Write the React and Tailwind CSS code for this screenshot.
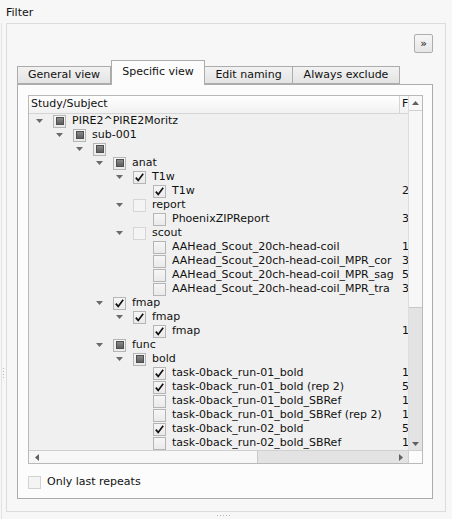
import React from 'react';

const rows = [
    { level: 0, label: 'PIRE2^PIRE2Moritz', state: 'partial', expanded: true },
    { level: 1, label: 'sub-001', state: 'partial', expanded: true },
    { level: 2, label: '', state: 'partial', expanded: true },
    { level: 3, label: 'anat', state: 'partial', expanded: true },
    { level: 4, label: 'T1w', state: 'checked', expanded: true },
    { level: 5, label: 'T1w', state: 'checked', value: '2' },
    { level: 4, label: 'report', state: 'unchecked', expanded: true, faded: true },
    { level: 5, label: 'PhoenixZIPReport', state: 'unchecked', value: '3' },
    { level: 4, label: 'scout', state: 'unchecked', expanded: true, faded: true },
    { level: 5, label: 'AAHead_Scout_20ch-head-coil', state: 'unchecked', value: '1' },
    { level: 5, label: 'AAHead_Scout_20ch-head-coil_MPR_cor', state: 'unchecked', value: '3' },
    { level: 5, label: 'AAHead_Scout_20ch-head-coil_MPR_sag', state: 'unchecked', value: '5' },
    { level: 5, label: 'AAHead_Scout_20ch-head-coil_MPR_tra', state: 'unchecked', value: '3' },
    { level: 3, label: 'fmap', state: 'checked', expanded: true },
    { level: 4, label: 'fmap', state: 'checked', expanded: true },
    { level: 5, label: 'fmap', state: 'checked', value: '1' },
    { level: 3, label: 'func', state: 'partial', expanded: true },
    { level: 4, label: 'bold', state: 'partial', expanded: true },
    { level: 5, label: 'task-0back_run-01_bold', state: 'checked', value: '1' },
    { level: 5, label: 'task-0back_run-01_bold (rep 2)', state: 'checked', value: '5' },
    { level: 5, label: 'task-0back_run-01_bold_SBRef', state: 'unchecked', value: '1' },
    { level: 5, label: 'task-0back_run-01_bold_SBRef (rep 2)', state: 'unchecked', value: '1' },
    { level: 5, label: 'task-0back_run-02_bold', state: 'checked', value: '5' },
    { level: 5, label: 'task-0back_run-02_bold_SBRef', state: 'unchecked', value: '1' },
];

const tabs = ['General view', 'Specific view', 'Edit naming', 'Always exclude'];

const CheckBox = ({ state, faded }) => (
    <span
        className={`flex h-[13px] w-[13px] shrink-0 items-center justify-center border ${
            faded ? 'border-[#d6d6d6] bg-[#f4f4f4]' : 'border-[#b5b5b5] bg-gradient-to-b from-[#f6f6f6] to-[#eaeaea]'
        }`}
    >
        {state === 'partial' && (
            <span className="block h-[8px] w-[8px] border border-[#4f4f4f] bg-gradient-to-b from-[#8a8a8a] to-[#5e5e5e]" />
        )}
        {state === 'checked' && (
            <svg width="11" height="11" viewBox="0 0 11 11">
                <path d="M1.8 5.6 L4.2 8.4 L9.2 1.8" fill="none" stroke="#111" strokeWidth="1.7" />
            </svg>
        )}
    </span>
);

const Arrow = () => (
    <svg width="7" height="4" viewBox="0 0 7 4">
        <path d="M0 0 H7 L3.5 4 Z" fill="#6a6a6a" />
    </svg>
);

const TreeRow = ({ row }) => (
    <div className="flex h-[14px] items-center whitespace-nowrap">
        <div className="flex w-[371px] shrink-0 items-center overflow-hidden">
            <span style={{ width: row.level * 20 }} className="shrink-0" />
            <span className="flex w-[20px] shrink-0 justify-center">{row.expanded && <Arrow />}</span>
            <span className="ml-[4px] shrink-0">
                <CheckBox state={row.state} faded={row.faded} />
            </span>
            <span className="ml-[6px]">{row.label}</span>
        </div>
        <div className="pl-[2px]">{row.value}</div>
    </div>
);

export default function App() {
    return (
        <div className="flex h-[519px] w-[452px] bg-[#f7f7f7] font-['DejaVu_Sans',sans-serif] text-[11px] text-[#111]">
            <div className="flex w-[6px] shrink-0 flex-col">
                <div className="mt-[23px] ml-[1px] flex flex-1 flex-col border-l border-[#e2e2e2]">
                    <div className="mt-[345px] ml-[1px] flex flex-col gap-[2px]">
                        {[0, 1, 2, 3].map(i => (
                            <span key={i} className="block h-[1px] w-[1px] bg-[#b8b8b8]" />
                        ))}
                    </div>
                </div>
            </div>
            <div className="flex flex-1 flex-col">
                <div className="flex h-[23px] items-center pt-[3px]">Filter</div>
                <div className="flex h-[489px] w-[440px] flex-col border border-[#dcdcdc] px-[10px] pt-[10px] pb-[12px] pr-[12px]">
                    <div className="flex justify-end">
                        <button className="flex h-[19px] w-[19px] items-center justify-center rounded-[2px] border border-[#adadad] bg-gradient-to-b from-[#f6f6f6] to-[#e6e6e6] pb-[1px] leading-none">
                            »
                        </button>
                    </div>
                    <div className="mt-[7px] flex h-[24px] items-end">
                        {tabs.map((t, i) =>
                            i === 1 ? (
                                <div
                                    key={t}
                                    className="relative z-10 -mb-[1px] flex h-[25px] w-[94px] items-center justify-center border border-b-0 border-[#acacac] bg-[#fcfcfc] pb-[1px]"
                                >
                                    {t}
                                </div>
                            ) : (
                                <div
                                    key={t}
                                    className={`flex h-[18px] items-center justify-center border border-[#acacac] bg-gradient-to-b from-[#f2f2f2] to-[#e4e4e4] pt-[1px] ${
                                        i === 0 ? 'w-[94px]' : i === 2 ? 'w-[88px] border-l-0' : 'w-[107px] border-l-0'
                                    }`}
                                >
                                    {t}
                                </div>
                            )
                        )}
                    </div>
                    <div className="flex flex-1 flex-col border border-[#acacac] bg-[#fcfcfc] pt-[10px] pl-[10px] pr-[9px]">
                        <div className="flex h-[369px] flex-col border border-[#b9b9b9] bg-[#f0f0f0]">
                            <div className="flex flex-1 overflow-hidden">
                                <div className="flex w-[380px] flex-col overflow-hidden">
                                    <div className="flex h-[18px] shrink-0 items-center border-b border-[#d5d5d5] bg-gradient-to-b from-[#ffffff] to-[#f1f1f1]">
                                        <div className="w-[371px] shrink-0 border-r border-[#d5d5d5] pl-[2px]">Study/Subject</div>
                                        <div className="pl-[2px]">F</div>
                                    </div>
                                    <div className="flex flex-col">
                                        {rows.map((r, i) => (
                                            <TreeRow key={i} row={r} />
                                        ))}
                                    </div>
                                </div>
                                <div className="flex w-[14px] shrink-0 flex-col border-l border-[#dcdcdc]">
                                    <div className="flex h-[15px] items-center justify-center border-b border-[#d0d0d0] bg-[#f8f8f8]">
                                        <svg width="7" height="4" viewBox="0 0 7 4">
                                            <path d="M0 4 H7 L3.5 0 Z" fill="#606060" />
                                        </svg>
                                    </div>
                                    <div className="h-[196px] bg-[#f7f7f7]" />
                                    <div className="flex-1 border-t border-[#c8c8c8] bg-[#e3e3e3]" />
                                    <div className="flex h-[13px] items-center justify-center bg-[#e3e3e3]">
                                        <svg width="7" height="4" viewBox="0 0 7 4">
                                            <path d="M0 0 H7 L3.5 4 Z" fill="#606060" />
                                        </svg>
                                    </div>
                                </div>
                            </div>
                            <div className="flex h-[13px] shrink-0 border-t border-[#d0d0d0]">
                                <div className="flex w-[15px] items-center justify-center bg-[#f7f7f7]">
                                    <svg width="4" height="7" viewBox="0 0 4 7">
                                        <path d="M4 0 V7 L0 3.5 Z" fill="#606060" />
                                    </svg>
                                </div>
                                <div className="w-[213px] bg-[#f7f7f7]" />
                                <div className="flex-1 border-l border-[#c8c8c8] bg-[#e3e3e3]" />
                                <div className="flex w-[15px] items-center justify-center bg-[#e3e3e3]">
                                    <svg width="4" height="7" viewBox="0 0 4 7">
                                        <path d="M0 0 V7 L4 3.5 Z" fill="#606060" />
                                    </svg>
                                </div>
                                <div className="w-[14px] border-l border-[#d0d0d0] bg-[#fcfcfc]" />
                            </div>
                        </div>
                        <div className="mt-[10px] flex items-center gap-[6px]">
                            <span className="block h-[13px] w-[13px] border border-[#d2d2d2] bg-[#f4f4f4]" />
                            <span>Only last repeats</span>
                        </div>
                    </div>
                </div>
                <div className="flex flex-1 items-center justify-center gap-[2px] pr-[12px]">
                    {[0, 1, 2, 3, 4].map(i => (
                        <span key={i} className="block h-[1px] w-[1px] bg-[#b8b8b8]" />
                    ))}
                </div>
            </div>
        </div>
    );
}
